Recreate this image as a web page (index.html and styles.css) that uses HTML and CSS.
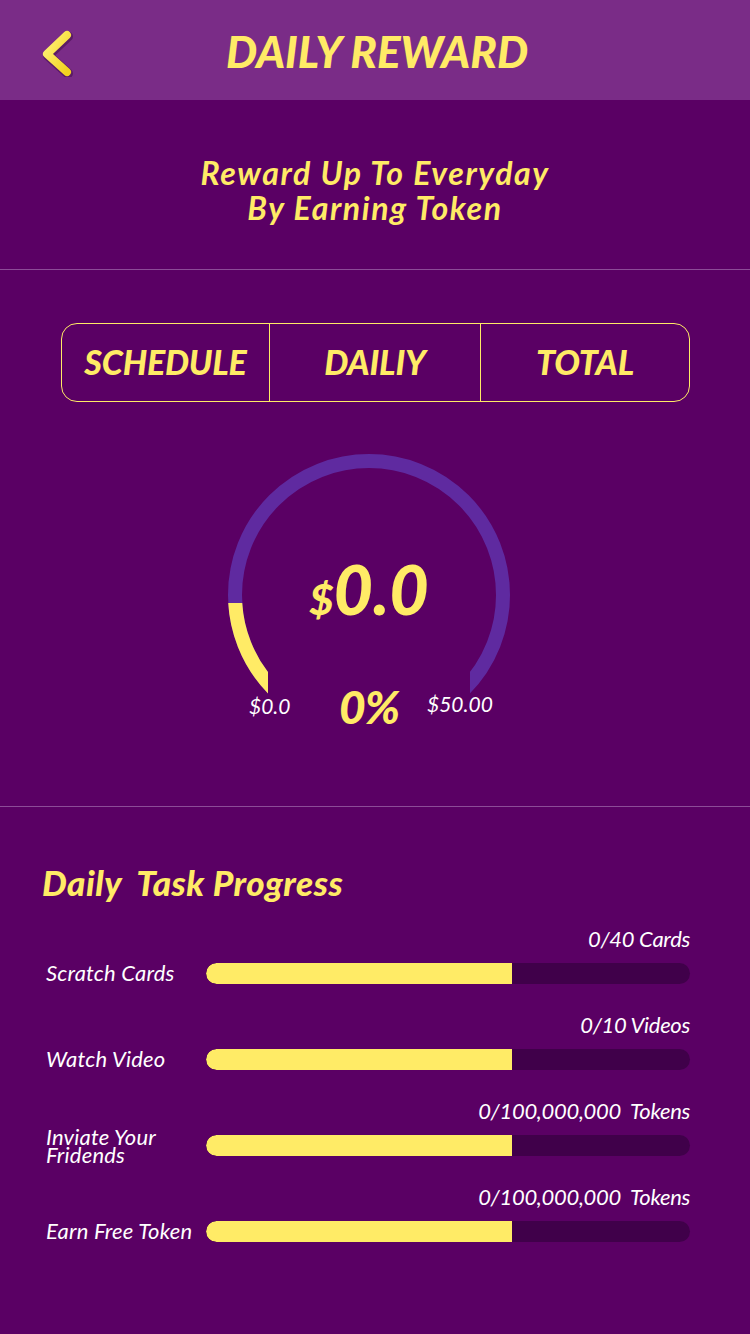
FILE: index.html
```html
<!DOCTYPE html>
<html>
<head>
<meta charset="utf-8">
<link rel="stylesheet" href="styles.css">
</head>
<body>
<div class="app">
  <header class="topbar">
    <div class="back">
      <svg width="40" height="52" viewBox="0 0 40 52">
        <defs>
          <linearGradient id="cg" x1="0" y1="0" x2="1" y2="1">
            <stop offset="0" stop-color="#fff27a"/>
            <stop offset="1" stop-color="#f2d21e"/>
          </linearGradient>
        </defs>
        <polyline points="29,10 9,29 29,47" fill="none" stroke="#3c0a45" stroke-opacity="0.5" stroke-width="10" stroke-linecap="round" stroke-linejoin="round" transform="translate(1,1.5)"/>
        <polyline points="29,10 9,29 29,47" fill="none" stroke="url(#cg)" stroke-width="8" stroke-linecap="round" stroke-linejoin="round"/>
      </svg>
    </div>
    <h1 class="title">DAILY REWARD</h1>
    <div class="spacer"></div>
  </header>

  <section class="intro">
    <p class="intro-line">Reward Up To Everyday</p>
    <p class="intro-line">By Earning Token</p>
  </section>

  <section class="summary">
    <div class="tabs">
      <div class="tab">SCHEDULE</div>
      <div class="tab">DAILIY</div>
      <div class="tab">TOTAL</div>
    </div>

    <div class="gauge-wrap">
      <div class="gauge">
        <svg class="gauge-svg" width="300" height="260" viewBox="0 0 300 260">
          <defs>
            <clipPath id="clipTrack">
              <path d="M0 0 H300 V260 H251 V150 H49 V260 H0 Z"/>
            </clipPath>
            <clipPath id="clipFill">
              <rect x="0" y="158" width="49" height="102"/>
            </clipPath>
          </defs>
          <circle cx="150" cy="150" r="134" fill="none" stroke="#5f2aa0" stroke-width="14" clip-path="url(#clipTrack)"/>
          <circle cx="150" cy="150" r="134" fill="none" stroke="#ffeb66" stroke-width="14" clip-path="url(#clipFill)"/>
        </svg>
        <div class="amount"><span class="cur">$</span>0.0</div>
        <div class="min">$0.0</div>
        <div class="pct">0%</div>
        <div class="max">$50.00</div>
      </div>
    </div>
  </section>

  <section class="tasks">
    <h2 class="tasks-title">Daily&nbsp; Task Progress</h2>

    <div class="task">
      <div class="task-value">0/40 Cards</div>
      <div class="task-line">
        <div class="task-label">Scratch Cards</div>
        <div class="bar"><div class="bar-fill" style="width:63.2%"></div></div>
      </div>
    </div>

    <div class="task">
      <div class="task-value">0/10 Videos</div>
      <div class="task-line">
        <div class="task-label">Watch Video</div>
        <div class="bar"><div class="bar-fill" style="width:63.2%"></div></div>
      </div>
    </div>

    <div class="task">
      <div class="task-value">0/100,000,000&nbsp; Tokens</div>
      <div class="task-line">
        <div class="task-label two"><span class="ln">Inviate Your</span><span class="ln">Fridends</span></div>
        <div class="bar"><div class="bar-fill" style="width:63.2%"></div></div>
      </div>
    </div>

    <div class="task">
      <div class="task-value">0/100,000,000&nbsp; Tokens</div>
      <div class="task-line">
        <div class="task-label">Earn Free Token</div>
        <div class="bar"><div class="bar-fill" style="width:63.2%"></div></div>
      </div>
    </div>
  </section>
</div>
</body>
</html>
```

FILE: styles.css
```css
* { box-sizing: border-box; }
html, body {
  margin: 0;
  padding: 0;
  background: #5a0064;
}
body {
  font-family: Lato, "Open Sans", sans-serif;
  width: 750px;
  min-height: 1334px;
}
.app {
  width: 750px;
  min-height: 1334px;
  background: #5a0064;
}

.topbar {
  height: 100px;
  background: #7a2c87;
  display: grid;
  grid-template-columns: 1fr auto 1fr;
  align-items: center;
}
.back {
  padding-left: 38px;
  display: flex;
  align-items: center;
  height: 100px;
  padding-top: 2px;
}
.title {
  margin: 0;
  font-size: 44px;
  font-weight: 900;
  font-style: italic;
  color: #ffeb66;
  letter-spacing: 0;
  line-height: 1;
  padding-left: 4px;
  padding-top: 2px;
}

.intro {
  height: 170px;
  border-bottom: 1px solid #8c4c97;
  display: flex;
  flex-direction: column;
  align-items: center;
  padding-top: 60px;
  gap: 9px;
}
.intro-line {
  margin: 0;
  text-align: center;
  font-size: 32px;
  line-height: 26px;
  height: 26px;
  font-weight: 700;
  font-style: italic;
  color: #ffeb66;
  letter-spacing: 1.6px;
}

.summary {
  height: 537px;
  border-bottom: 1px solid #8c4c97;
  padding-top: 53px;
}
.tabs {
  margin: 0 60px 0 61px;
  height: 79px;
  border: 1px solid #ffeb66;
  border-radius: 16px;
  display: grid;
  grid-template-columns: 207px 211px 1fr;
}
.tab {
  display: flex;
  align-items: center;
  justify-content: center;
  font-size: 34px;
  font-weight: 900;
  font-style: italic;
  color: #ffeb66;
  letter-spacing: -0.2px;
  padding-bottom: 2px;
}
.tab + .tab {
  border-left: 1px solid #ffeb66;
}

.gauge-wrap {
  display: flex;
  justify-content: center;
  padding-right: 12px;
  margin-top: 43px;
}
.gauge {
  position: relative;
  width: 300px;
  height: 290px;
}
.gauge-svg { display: block; }
.amount {
  position: absolute;
  left: 0;
  right: 0;
  top: 110px;
  text-align: center;
  font-size: 68px;
  font-weight: 900;
  font-style: italic;
  color: #ffeb66;
  line-height: 1;
  letter-spacing: 0;
}
.amount .cur {
  font-size: 42px;
}
.min, .max {
  position: absolute;
  font-size: 21px;
  font-style: italic;
  color: #ffffff;
  line-height: 1;
}
.min { left: 30px; top: 250px; }
.max { left: 208px; top: 248px; }
.pct {
  position: absolute;
  left: 0;
  right: 0;
  top: 239px;
  text-align: center;
  font-size: 46px;
  font-weight: 900;
  font-style: italic;
  color: #ffeb66;
  line-height: 1;
  letter-spacing: -1px;
}

.tasks {
  padding: 53px 60px 0 46px;
}
.tasks-title {
  margin: 0 0 22px -4px;
  font-size: 35px;
  line-height: 44px;
  font-weight: 900;
  font-style: italic;
  color: #ffeb66;
  letter-spacing: 0.5px;
}
.task + .task {
  margin-top: 28px;
}
.task-value {
  text-align: right;
  font-size: 22px;
  line-height: 26px;
  height: 26px;
  font-style: italic;
  color: #ffffff;
  margin-bottom: 10px;
  letter-spacing: -0.3px;
}
.task-line {
  display: grid;
  grid-template-columns: 160px 1fr;
  grid-template-rows: 22px;
  align-items: center;
  height: 22px;
}
.task-label {
  font-size: 22px;
  font-style: italic;
  color: #ffffff;
  line-height: 22px;
  letter-spacing: 0.2px;
  white-space: nowrap;
}
.task-label.two {
  display: flex;
  flex-direction: column;
  line-height: 17px;
  padding-top: 2px;
}
.task-label.two .ln {
  display: block;
  height: 18px;
}
.bar {
  height: 21px;
  border-radius: 11px;
  background: #40004a;
  overflow: hidden;
}
.bar-fill {
  height: 100%;
  background: #ffeb66;
  border-radius: 11px 0 0 11px;
}
```
